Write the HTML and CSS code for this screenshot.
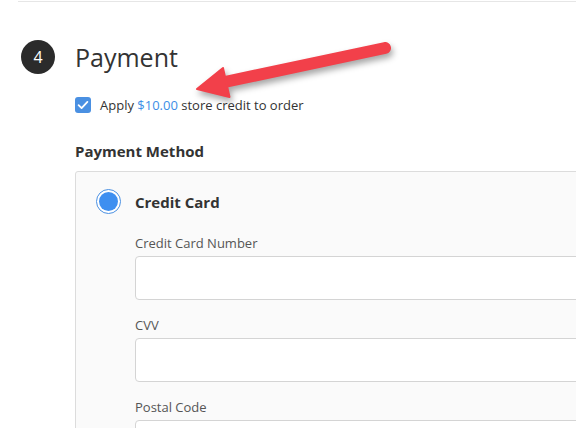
FILE: index.html
```html
<!DOCTYPE html>
<html>
<head>
<meta charset="utf-8">
<link rel="stylesheet" href="styles.css">
</head>
<body>
<div class="page">
  <div class="divider"></div>
  <section class="step">
    <header class="step-head">
      <span class="step-num">4</span>
      <h2 class="step-title">Payment</h2>
    </header>
    <div class="step-body">
      <label class="credit">
        <span class="checkbox">
          <svg width="16" height="16" viewBox="0 0 16 16"><path d="M3.6 8.2 L6.6 11.1 L12.4 4.9" fill="none" stroke="#fff" stroke-width="1.8" stroke-linecap="round" stroke-linejoin="round"/></svg>
        </span>
        <span class="credit-text">Apply <span class="amount">$10.00</span> store credit to order</span>
      </label>
      <h3 class="method-heading">Payment Method</h3>
      <div class="methods">
        <div class="method">
          <div class="method-row">
            <span class="radio"><span class="radio-dot"></span></span>
            <span class="method-name">Credit Card</span>
          </div>
          <div class="fields">
            <div class="field">
              <label class="field-label">Credit Card Number</label>
              <div class="input"></div>
            </div>
            <div class="field">
              <label class="field-label">CVV</label>
              <div class="input"></div>
            </div>
            <div class="field">
              <label class="field-label">Postal Code</label>
              <div class="input"></div>
            </div>
          </div>
        </div>
      </div>
    </div>
  </section>
  <svg class="arrow" width="576" height="428" viewBox="0 0 576 428">
    <g class="arrow-shape">
      <line x1="385" y1="48" x2="220" y2="83" stroke="#f2404a" stroke-width="12" stroke-linecap="round"/>
      <polygon points="197,89 223,68 229.5,97" fill="#f2404a" stroke="#f2404a" stroke-width="2" stroke-linejoin="round"/>
    </g>
  </svg>
</div>
</body>
</html>
```

FILE: styles.css
```css
html, body {
  margin: 0;
  padding: 0;
  background: #fff;
}
body {
  width: 576px;
  height: 428px;
  overflow: hidden;
  font-family: "Open Sans", "Liberation Sans", sans-serif;
  color: #333;
}
.page {
  position: relative;
  width: 576px;
  height: 428px;
  overflow: hidden;
}
.divider {
  margin-left: 18px;
  margin-top: 1px;
  height: 1px;
  background: #e6e6e6;
}
.step {
  padding-top: 38px;
}
.step-head {
  display: flex;
  align-items: center;
  gap: 20px;
  padding-left: 21px;
  height: 34px;
}
.step-num {
  width: 34px;
  height: 34px;
  border-radius: 50%;
  background: #2b2b2b;
  color: #fff;
  display: flex;
  align-items: center;
  justify-content: center;
  font-size: 16px;
}
.step-title {
  margin: 0;
  font-size: 25px;
  font-weight: 400;
  color: #333;
  line-height: 34px;
}
.step-body {
  padding-left: 75px;
  padding-top: 23px;
}
.credit {
  display: flex;
  align-items: center;
  gap: 9px;
  height: 16px;
}
.checkbox {
  width: 16px;
  height: 16px;
  border-radius: 3px;
  background: #4a90e2;
  display: block;
}
.checkbox svg {
  display: block;
}
.credit-text {
  font-size: 13px;
  color: #333;
  line-height: 18px;
}
.amount {
  color: #3d8ee6;
}
.method-heading {
  margin: 28px 0 0 0;
  font-size: 15px;
  font-weight: 700;
  line-height: 20px;
  color: #333;
}
.methods {
  margin-top: 10px;
  width: 700px;
  border: 1px solid #dcdcdc;
  border-radius: 3px;
  background: #fafafa;
}
.method {
  padding: 17px 0 0 20px;
}
.method-row {
  display: flex;
  align-items: center;
  gap: 14px;
}
.radio {
  width: 23px;
  height: 23px;
  border: 1px solid #4a90e2;
  border-radius: 50%;
  background: #fff;
  display: flex;
  align-items: center;
  justify-content: center;
}
.radio-dot {
  width: 19px;
  height: 19px;
  border-radius: 50%;
  background: #3e8ff0;
}
.method-name {
  font-size: 15px;
  font-weight: 700;
  color: #333;
}
.fields {
  padding-left: 39px;
  padding-top: 20px;
  display: flex;
  flex-direction: column;
  gap: 16px;
}
.field {
  display: flex;
  flex-direction: column;
  gap: 4px;
}
.field-label {
  font-size: 13px;
  line-height: 18px;
  color: #555;
}
.input {
  height: 42px;
  width: 600px;
  border: 1px solid #d4d4d4;
  border-radius: 4px;
  background: #fff;
}
.arrow {
  position: absolute;
  left: 0;
  top: 0;
  pointer-events: none;
}
.arrow-shape {
  filter: drop-shadow(2px 4px 3px rgba(0, 0, 0, 0.35));
}
```
